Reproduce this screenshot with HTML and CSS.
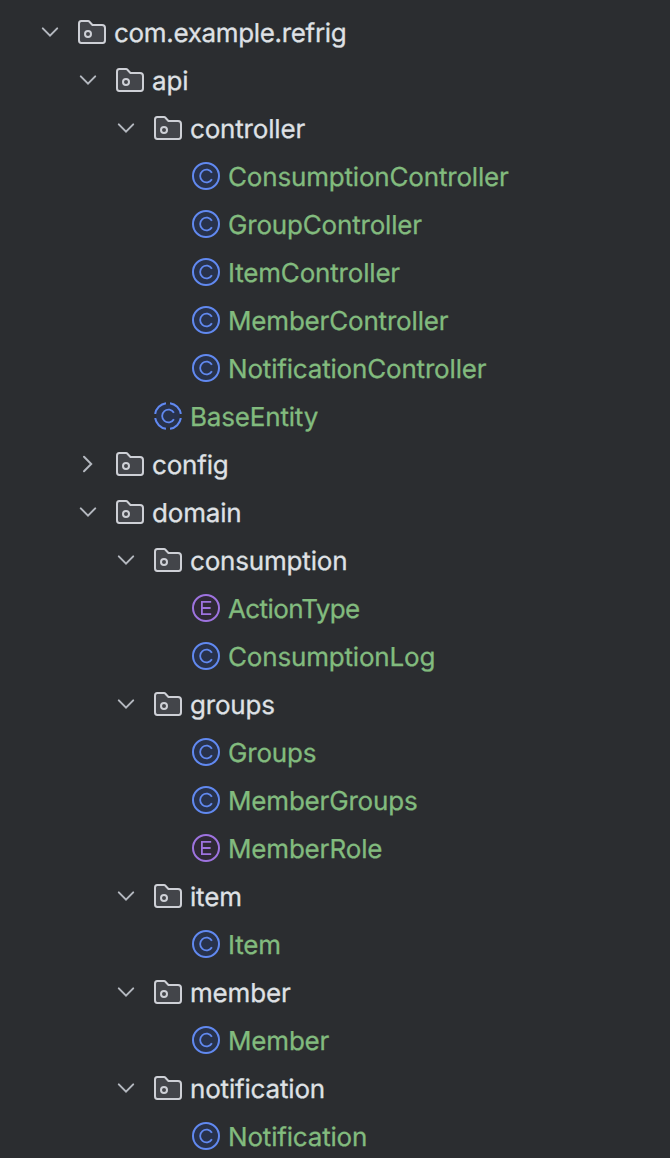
FILE: index.html
```
<!DOCTYPE html>
<html lang="en">
<head>
  <meta charset="UTF-8">
  <title>Project</title>
  <meta name="viewport" content="width=device-width, initial-scale=1.0">
  <link rel="stylesheet" href="styles.css">
</head>
<body>
  <!-- shared icons -->
  <svg class="defs" width="0" height="0">
    <symbol id="open" viewBox="0 0 16 16">
      <path d="M4.4 6.2L8 9.8L11.6 6.2" fill="none" stroke="#b4b8bf" stroke-linecap="round"/>
    </symbol>
    <symbol id="closed" viewBox="0 0 16 16">
      <path d="M6 4.4L9.6 8L6 11.6" fill="none" stroke="#b4b8bf" stroke-linecap="round"/>
    </symbol>
    <symbol id="package" viewBox="0 0 16 16">
      <path d="M8.106 4.346L8.253 4.5H13C13.83 4.5 14.5 5.17 14.5 6V12.13C14.5 12.95 13.93 13.5 13.37 13.5H2.63C2.07 13.5 1.5 12.95 1.5 12.13V3.87C1.5 3.05 2.07 2.5 2.63 2.5H6.12C6.26 2.5 6.39 2.56 6.48 2.65Z" fill="#43454a" stroke="#ced0d6"/>
      <circle cx="6" cy="9" r="1.5" fill="none" stroke="#ced0d6"/>
    </symbol>
    <symbol id="class" viewBox="0 0 16 16">
      <circle cx="8" cy="8" r="6.5" fill="#28324b" stroke="#6189f0"/>
      <path d="M10.95 6.4A3.15 3.2 0 1 0 10.95 9.6" fill="none" stroke="#6189f0" stroke-width="0.9"/>
    </symbol>
    <symbol id="abstract" viewBox="0 0 16 16">
      <circle cx="8" cy="8" r="7" fill="#28324b"/>
      <path d="M9 1.58A6.5 6.5 0 0 1 14.42 7M14.42 9A6.5 6.5 0 0 1 9 14.42M7 14.42A6.5 6.5 0 0 1 1.58 9M1.58 7A6.5 6.5 0 0 1 7 1.58" fill="none" stroke="#6189f0"/>
      <path d="M8 1V2.2M8 13.8V15M1 8H2.2M13.8 8H15" fill="none" stroke="#2b2d30" stroke-width="2"/>
      <path d="M10.95 6.4A3.15 3.2 0 1 0 10.95 9.6" fill="none" stroke="#6189f0" stroke-width="0.9"/>
    </symbol>
    <symbol id="enum" viewBox="0 0 16 16">
      <circle cx="8" cy="8" r="6.5" fill="#2f2936" stroke="#9e73df"/>
      <path d="M10.6 4.9H5.95V11.1H10.6M6 8H10.3" fill="none" stroke="#9e73df" stroke-width="0.9"/>
    </symbol>
  </svg>

  <ul class="tree">
    <li>
      <div class="row root"><svg class="arrow"><use href="#open"/></svg><svg class="icon"><use href="#package"/></svg><span>com.example.refrig</span></div>
      <ul>
        <li>
          <div class="row"><svg class="arrow"><use href="#open"/></svg><svg class="icon"><use href="#package"/></svg><span>api</span></div>
          <ul>
            <li>
              <div class="row"><svg class="arrow"><use href="#open"/></svg><svg class="icon"><use href="#package"/></svg><span>controller</span></div>
              <ul>
                <li class="row file"><svg class="icon"><use href="#class"/></svg><span>ConsumptionController</span></li>
                <li class="row file"><svg class="icon"><use href="#class"/></svg><span>GroupController</span></li>
                <li class="row file"><svg class="icon"><use href="#class"/></svg><span>ItemController</span></li>
                <li class="row file"><svg class="icon"><use href="#class"/></svg><span>MemberController</span></li>
                <li class="row file"><svg class="icon"><use href="#class"/></svg><span>NotificationController</span></li>
              </ul>
            </li>
            <li class="row file"><svg class="icon"><use href="#abstract"/></svg><span>BaseEntity</span></li>
          </ul>
        </li>
        <li>
          <div class="row"><svg class="arrow"><use href="#closed"/></svg><svg class="icon"><use href="#package"/></svg><span>config</span></div>
        </li>
        <li>
          <div class="row"><svg class="arrow"><use href="#open"/></svg><svg class="icon"><use href="#package"/></svg><span>domain</span></div>
          <ul>
            <li>
              <div class="row"><svg class="arrow"><use href="#open"/></svg><svg class="icon"><use href="#package"/></svg><span>consumption</span></div>
              <ul>
                <li class="row file tight"><svg class="icon"><use href="#enum"/></svg><span>ActionType</span></li>
                <li class="row file"><svg class="icon"><use href="#class"/></svg><span>ConsumptionLog</span></li>
              </ul>
            </li>
            <li>
              <div class="row"><svg class="arrow"><use href="#open"/></svg><svg class="icon"><use href="#package"/></svg><span>groups</span></div>
              <ul>
                <li class="row file"><svg class="icon"><use href="#class"/></svg><span>Groups</span></li>
                <li class="row file"><svg class="icon"><use href="#class"/></svg><span>MemberGroups</span></li>
                <li class="row file"><svg class="icon"><use href="#enum"/></svg><span>MemberRole</span></li>
              </ul>
            </li>
            <li>
              <div class="row"><svg class="arrow"><use href="#open"/></svg><svg class="icon"><use href="#package"/></svg><span>item</span></div>
              <ul>
                <li class="row file"><svg class="icon"><use href="#class"/></svg><span>Item</span></li>
              </ul>
            </li>
            <li>
              <div class="row"><svg class="arrow"><use href="#open"/></svg><svg class="icon"><use href="#package"/></svg><span>member</span></div>
              <ul>
                <li class="row file"><svg class="icon"><use href="#class"/></svg><span>Member</span></li>
              </ul>
            </li>
            <li>
              <div class="row"><svg class="arrow"><use href="#open"/></svg><svg class="icon"><use href="#package"/></svg><span>notification</span></div>
              <ul>
                <li class="row file"><svg class="icon"><use href="#class"/></svg><span>Notification</span></li>
              </ul>
            </li>
          </ul>
        </li>
      </ul>
    </li>
  </ul>
</body>
</html>
```
FILE: styles.css
```
body {
  margin: 0; height: 1158px; overflow: hidden;
  background: #2b2d30; color: #dfe1e5;
  font-family: Inter, "Liberation Sans", sans-serif; font-size: 26px;
  letter-spacing: -0.18px;
  text-rendering: geometricPrecision; font-optical-sizing: none;
  -webkit-text-stroke: 0.3px;
}
.defs { display: block; }
ul { list-style: none; margin: 0; padding: 0 0 0 38px; }
.tree { padding: 8px 0 0 34px; }
.row { display: flex; align-items: center; height: 48px; white-space: nowrap; }
.row > span { line-height: 46px; padding-top: 4px; }
.root { letter-spacing: -0.33px; }
.arrow { width: 32px; height: 32px; margin-right: 10px; flex: none; }
.icon { width: 32px; height: 32px; margin-right: 6px; flex: none; }
/* files have no arrow, so they are pushed in by its width */
.file { padding-left: 42px; color: #82bb7e; }
.tight { letter-spacing: -0.6px; }
```
